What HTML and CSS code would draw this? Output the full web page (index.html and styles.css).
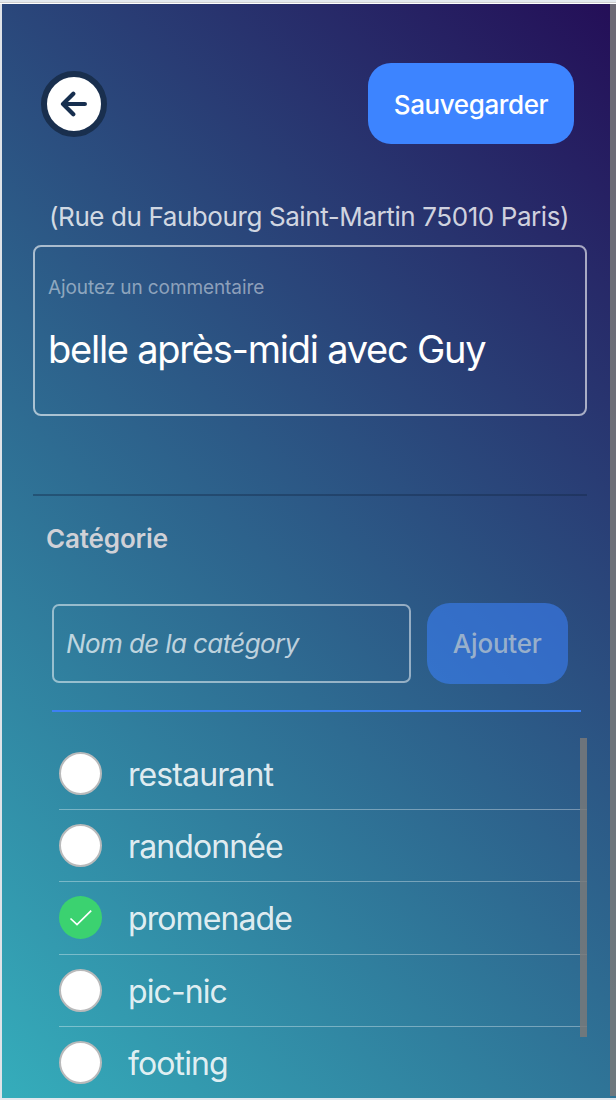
FILE: index.html
```html
<!DOCTYPE html>
<html lang="fr">
<head>
<meta charset="utf-8">
<title>Catégorie</title>
<link rel="stylesheet" href="styles.css">
</head>
<body>
<div class="window">
  <main class="screen">
    <header class="header">
      <button class="back" aria-label="Retour">
        <svg width="28" height="26" viewBox="0 0 28 26" fill="none" stroke="#172f4f" stroke-width="4.2" stroke-linecap="round" stroke-linejoin="round"><path d="M13.3 2.8 3 13l10.3 10.2M3.5 13h21.4"/></svg>
      </button>
      <button class="btn save">Sauvegarder</button>
    </header>
    <p class="address"><span>(Rue du Faubourg Saint-Martin 75010 Paris)</span></p>
    <section class="comment">
      <label class="comment-label"><span>Ajoutez un commentaire</span></label>
      <div class="comment-value"><span>belle après-midi avec Guy</span></div>
    </section>
    <section class="category">
      <h2 class="title"><span>Catégorie</span></h2>
      <div class="add-row">
        <div class="field"><span>Nom de la catégory</span></div>
        <button class="btn add">Ajouter</button>
      </div>
      <div class="list-area">
        <ul class="list">
          <li class="item"><i class="radio"></i><span class="name">restaurant</span></li>
          <li class="item"><i class="radio"></i><span class="name">randonnée</span></li>
          <li class="item"><i class="radio checked"><svg width="24" height="18" viewBox="0 0 24 18" fill="none" stroke="#fff" stroke-width="1.7"><path d="M1.5 9.5 8 15.6 22.2 1.7"/></svg></i><span class="name">promenade</span></li>
          <li class="item"><i class="radio"></i><span class="name">pic-nic</span></li>
          <li class="item last"><i class="radio"></i><span class="name">footing</span></li>
        </ul>
        <div class="list-scrollbar"></div>
      </div>
    </section>
  </main>
  <div class="page-scrollbar"></div>
</div>
</body>
</html>
```
FILE: styles.css
```css
* { box-sizing: border-box; }
body {
  margin: 0;
  width: 616px;
  height: 1100px;
  overflow: hidden;
  background: #e3e8ee;
  font-family: Inter, "Liberation Sans", sans-serif;
}
h2, p, ul { margin: 0; padding: 0; }
button { border: 0; padding: 0; font-family: inherit; }
span, .btn { white-space: nowrap; }
.window {
  display: flex;
  height: 1098px;
  padding: 4px 0 0 2px;
  background: linear-gradient(#e3e9ee 2px, #cfcfcf 2px 3px, #fff 3px 4px, #dfe3e8 4px);
}
.screen {
  display: flex;
  flex-direction: column;
  width: 614px;
  height: 1094px;
  flex: none;
  padding: 59px 29px 0 31px;
  background: linear-gradient(45deg, #35adbb, #240e57);
  overflow: hidden;
}
.header, .address, .comment, .category { flex: none; }
.page-scrollbar {
  flex: none;
  width: 6px;
  height: 1092px;
  margin-left: -6px;
  background: rgba(121, 121, 121, .85);
}
.header {
  display: flex;
  justify-content: space-between;
  align-items: center;
  height: 81px;
  padding: 0 13px 0 8px;
}
.back {
  display: flex;
  align-items: center;
  justify-content: center;
  width: 66px;
  height: 66px;
  border: 6px solid #192f4e;
  border-radius: 50%;
  background: #fff;
}
.btn {
  height: 81px;
  padding-top: 2px;
  border-radius: 23px;
  background: #3d84ff;
  color: #fff;
  font-size: 26px;
  font-weight: 500;
  letter-spacing: -.4px;
}
.save { width: 206px; }
.address {
  height: 43px;
  margin-top: 58px;
  padding-left: 16px;
  font-size: 26px;
  line-height: 30px;
  letter-spacing: -.41px;
  color: rgba(255, 255, 255, .8);
}
.comment {
  height: 171px;
  border: 2px solid rgba(255, 255, 255, .6);
  border-radius: 8px;
  padding: 28px 13px 0;
}
.comment-label {
  display: block;
  font-size: 19px;
  line-height: 26px;
  letter-spacing: -.09px;
  color: rgba(255, 255, 255, .47);
}
.comment-value {
  margin-top: 24px;
  font-size: 38px;
  line-height: 48px;
  letter-spacing: -1.24px;
  color: #fff;
}
.category {
  margin-top: 78px;
  border-top: 2px solid rgba(20, 40, 70, .4);
}
.title {
  margin: 27px 0 0 13px;
  font-size: 26px;
  line-height: 32px;
  font-weight: 600;
  letter-spacing: -.15px;
  color: #d0d1d7;
}
.add-row {
  display: flex;
  align-items: center;
  gap: 16px;
  width: 529px;
  height: 110px;
  margin: 47px 0 0 19px;
  padding-bottom: 26px;
  border-bottom: 2px solid #3d80f5;
}
.field {
  width: 358.5px;
  height: 79px;
  padding-left: 12px;
  border: 2px solid rgba(255, 255, 255, .5);
  border-radius: 7px;
  font-size: 26px;
  font-style: italic;
  line-height: 76px;
  letter-spacing: -.6px;
  color: rgba(255, 255, 255, .7);
}
.add {
  width: 141.5px;
  padding-top: 1px;
  background: rgba(61, 132, 255, .55);
  color: rgba(221, 221, 206, .6);
  letter-spacing: -.2px;
}
.list-area { display: flex; margin: 26px 0 0 26px; }
.list { width: 528px; flex: none; list-style: none; }
.item {
  display: flex;
  align-items: center;
  gap: 26px;
  height: 72.2px;
  border-bottom: 1.5px solid rgba(255, 255, 255, .35);
}
.last { border: 0; }
.radio {
  display: flex;
  align-items: center;
  justify-content: center;
  width: 43px;
  height: 43px;
  flex: none;
  border: 2px solid #b9babb;
  border-radius: 50%;
  background: #fff;
}
.checked { border: 0; background: #3bd270; }
.name { padding-top: 3px; font-size: 32px; line-height: 40px; letter-spacing: -.9px; color: rgba(255, 255, 255, .87); }
.list-scrollbar {
  flex: none;
  width: 7px;
  height: 299px;
  margin-left: -7px;
  background: rgba(121, 121, 121, .85);
}
```
